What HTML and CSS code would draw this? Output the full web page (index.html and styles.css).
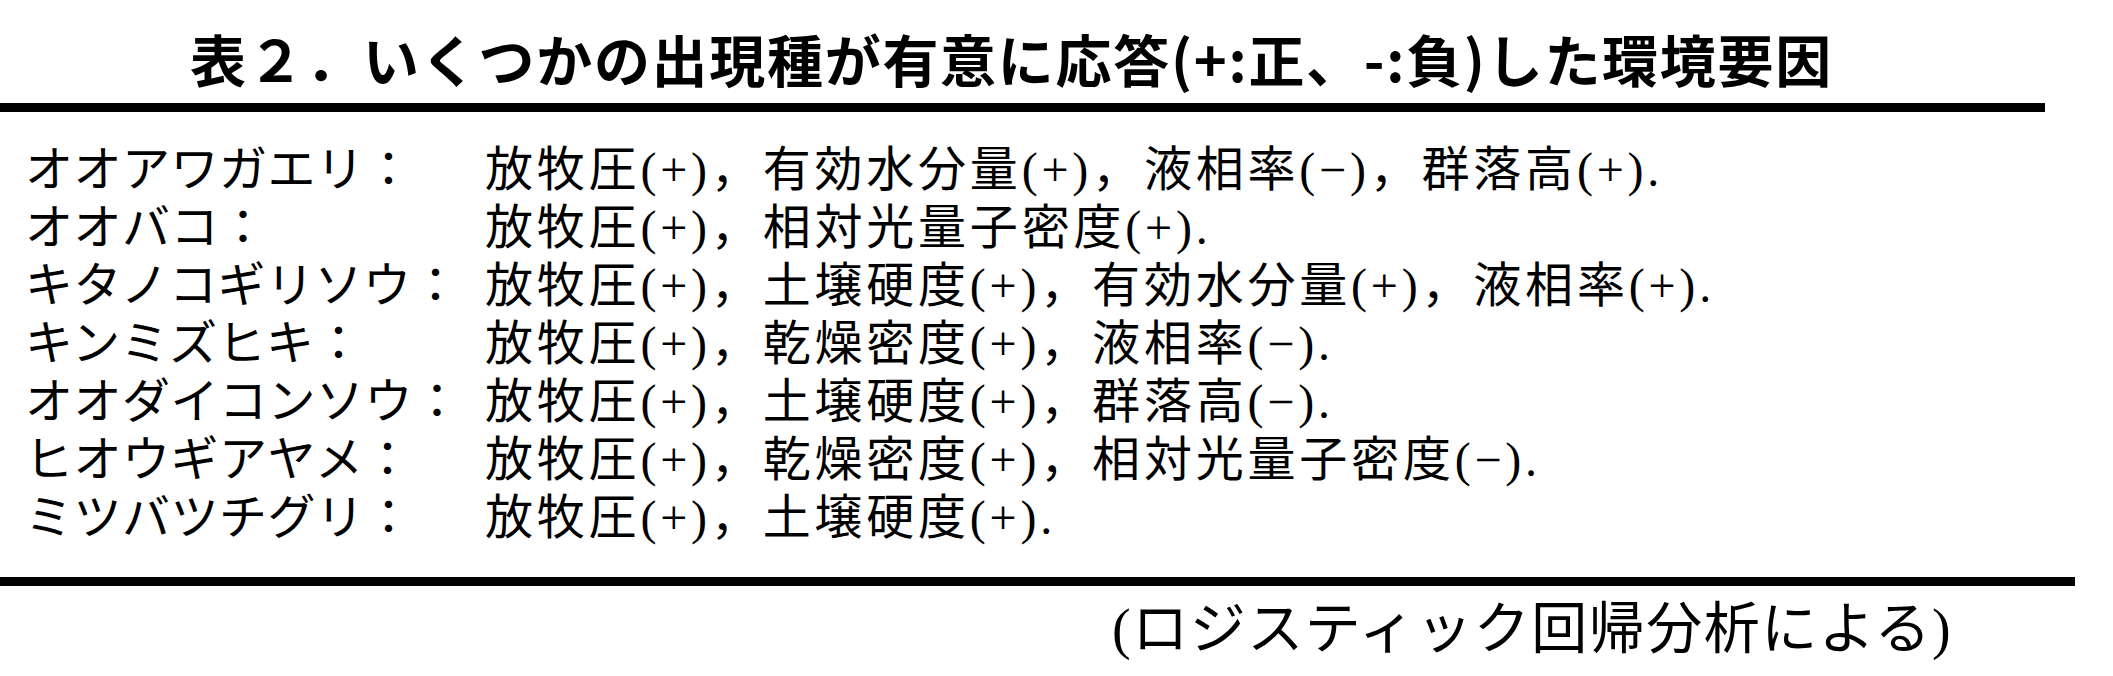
FILE: index.html
```html
<!DOCTYPE html>
<html lang="ja">
<head>
<meta charset="utf-8">
<title>表２</title>
<link rel="stylesheet" href="styles.css">
</head>
<body>
<div class="page">
  <h1 class="title">表２．いくつかの出現種が有意に応答(+:正、-:負)した環境要因</h1>
  <div class="rule rule-top"></div>
  <div class="table">
    <div class="label">オオアワガエリ：</div>
    <div class="value">放牧圧(+)，有効水分量(+)，液相率(−)，群落高(+).</div>
    <div class="label">オオバコ：</div>
    <div class="value">放牧圧(+)，相対光量子密度(+).</div>
    <div class="label">キタノコギリソウ：</div>
    <div class="value">放牧圧(+)，土壌硬度(+)，有効水分量(+)，液相率(+).</div>
    <div class="label">キンミズヒキ：</div>
    <div class="value">放牧圧(+)，乾燥密度(+)，液相率(−).</div>
    <div class="label">オオダイコンソウ：</div>
    <div class="value">放牧圧(+)，土壌硬度(+)，群落高(−).</div>
    <div class="label">ヒオウギアヤメ：</div>
    <div class="value">放牧圧(+)，乾燥密度(+)，相対光量子密度(−).</div>
    <div class="label">ミツバツチグリ：</div>
    <div class="value">放牧圧(+)，土壌硬度(+).</div>
  </div>
  <div class="rule rule-bottom"></div>
  <p class="note">(ロジスティック回帰分析による)</p>
</div>
</body>
</html>
```

FILE: styles.css
```css
html, body {
  margin: 0;
  padding: 0;
  background: #ffffff;
}

.page {
  width: 2113px;
  height: 676px;
  overflow: hidden;
  padding-top: 22px;
  box-sizing: border-box;
  color: #000000;
}

.title {
  margin: 0;
  padding-left: 190px;
  font-family: "Noto Sans CJK JP", "Liberation Sans", sans-serif;
  font-weight: 700;
  font-size: 56px;
  line-height: 72px;
  letter-spacing: 1.7px;
  white-space: nowrap;
}

.rule {
  background: #000000;
  height: 9px;
}

.rule-top {
  margin-top: 9px;
  width: 2045px;
}

.table {
  margin-top: 29px;
  display: grid;
  grid-template-columns: 460px 1fr;
  padding-left: 25px;
  font-family: "Liberation Serif", "Noto Sans CJK JP", serif;
  font-size: 48px;
  line-height: 58px;
  white-space: nowrap;
}

.label {
  letter-spacing: 0.5px;
}

.value {
  letter-spacing: 3.8px;
}

.rule-bottom {
  margin-top: 30px;
  width: 2075px;
}

.note {
  margin: 8px 0 0 0;
  padding-left: 1112px;
  font-family: "Liberation Serif", "Noto Sans CJK JP", serif;
  font-size: 56px;
  line-height: 70px;
  letter-spacing: 1.5px;
  white-space: nowrap;
}
```
